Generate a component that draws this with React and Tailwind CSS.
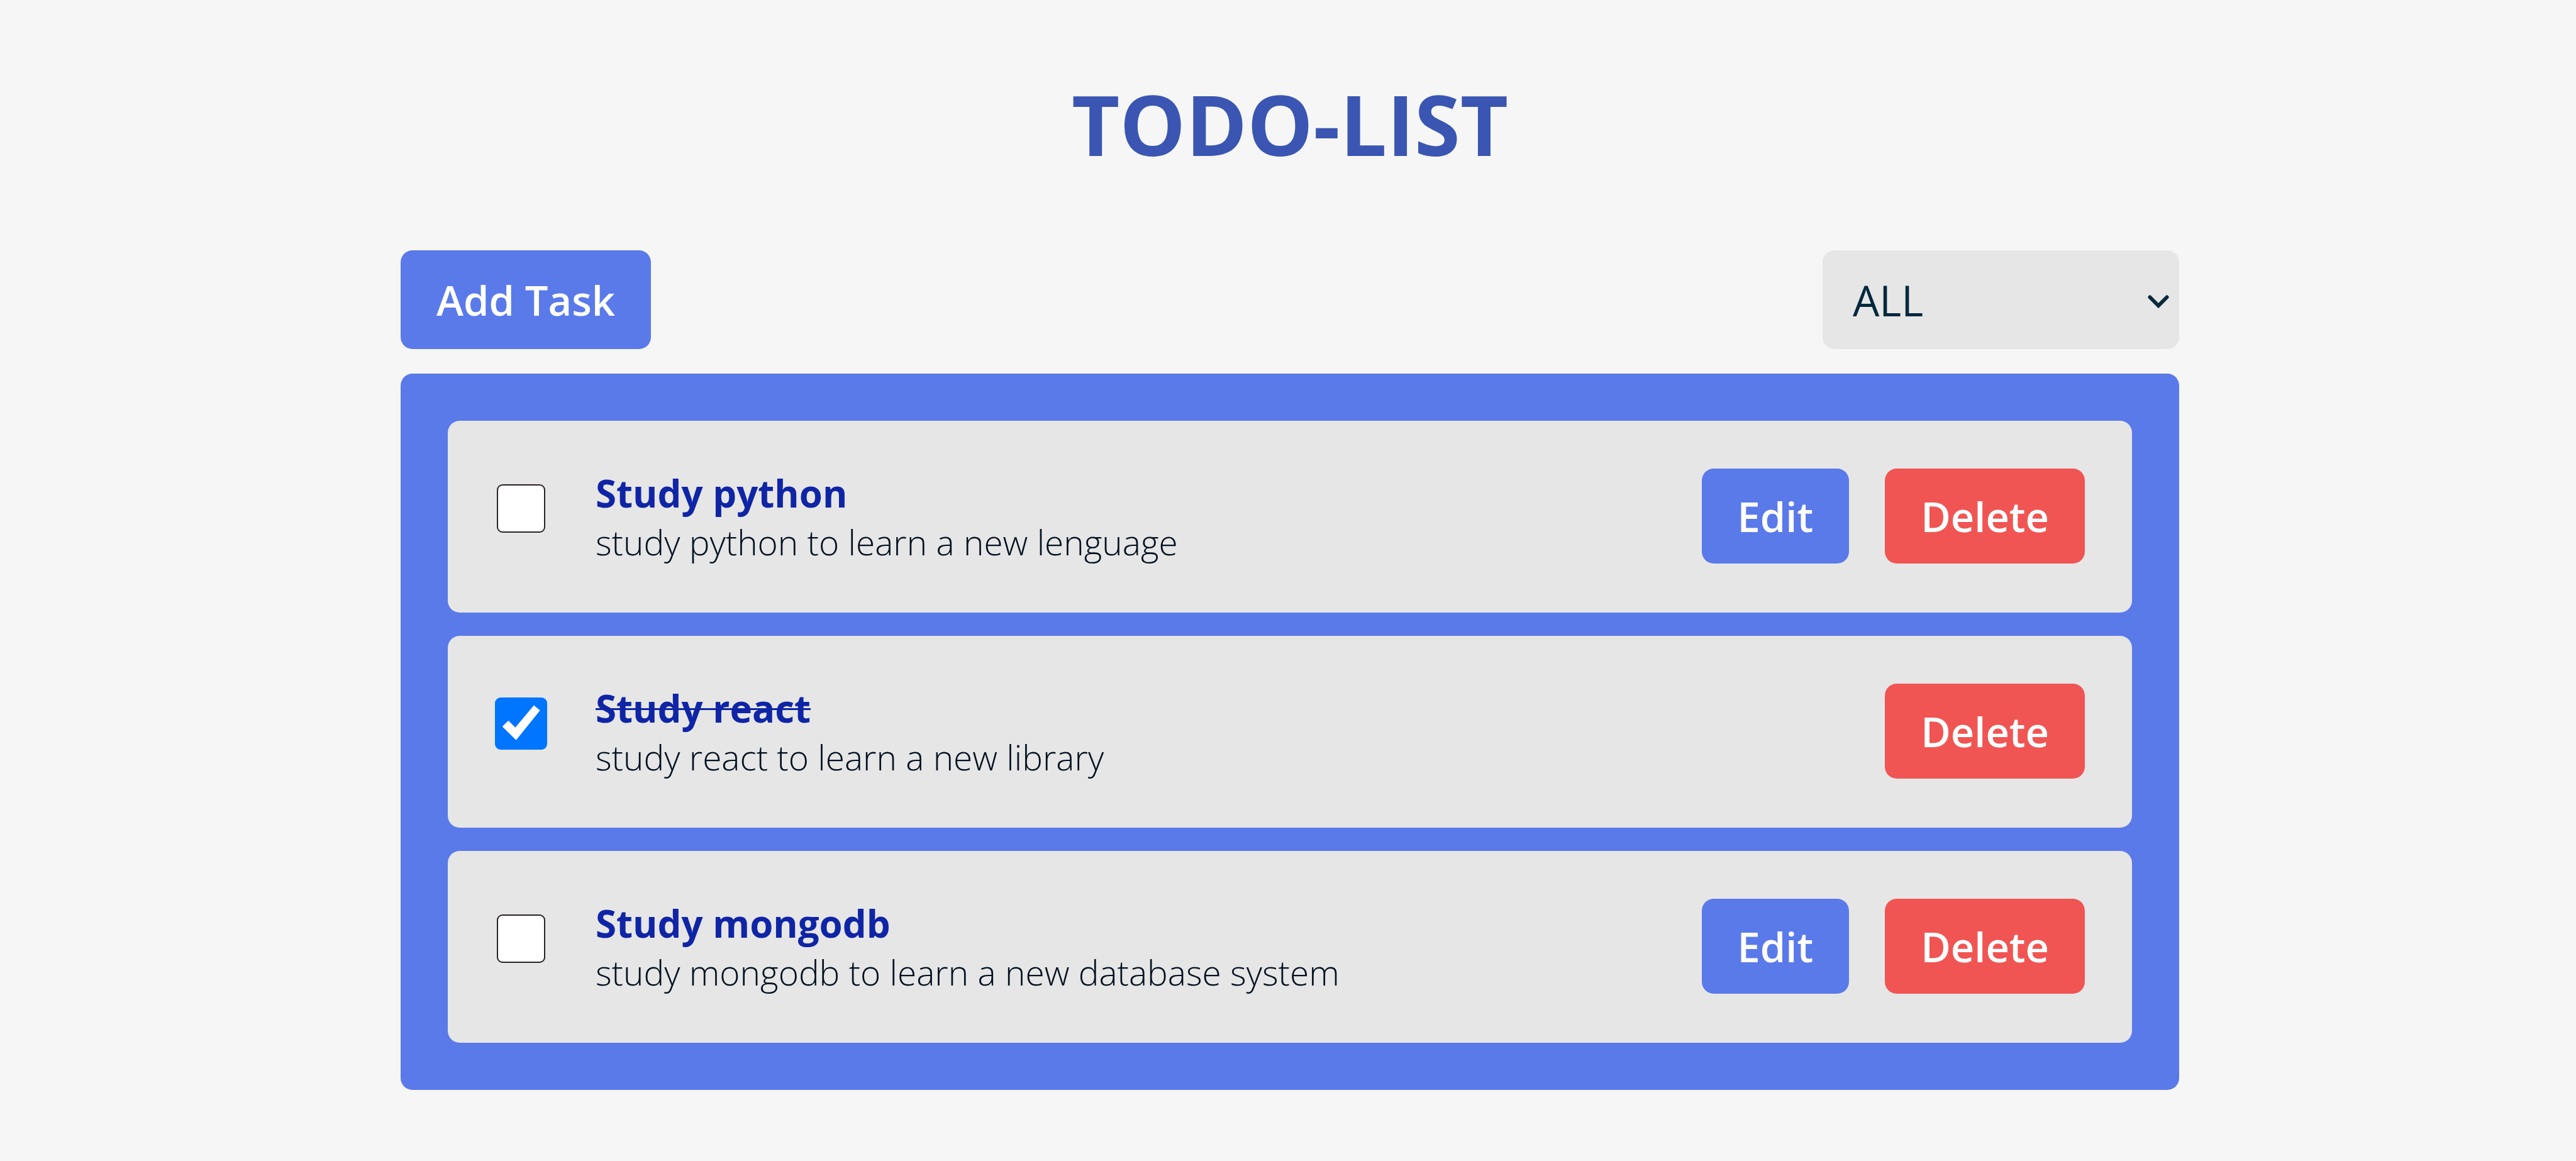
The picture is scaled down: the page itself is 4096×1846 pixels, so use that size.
import { useState } from "react";

const initialTasks = [
  { id: 1, title: "Study python", detail: "study python to learn a new lenguage", done: false },
  { id: 2, title: "Study react", detail: "study react to learn a new library", done: true },
  { id: 3, title: "Study mongodb", detail: "study mongodb to learn a new database system", done: false },
];

function CheckBox({ id, checked, onChange }) {
  return (
    <span className="mt-[22px] grid size-[83px] shrink-0 place-items-center">
      <input
        id={id}
        type="checkbox"
        checked={checked}
        onChange={onChange}
        className="col-start-1 row-start-1 size-[77px] appearance-none rounded-[9px] border-2 border-[#2a2224] bg-white checked:size-[83px] checked:border-0 checked:bg-[#0075ff]"
      />
      {checked && (
        <svg
          viewBox="0 0 83 83"
          className="pointer-events-none col-start-1 row-start-1 size-[83px]"
          aria-hidden="true"
        >
          <path d="M61.9 12.6L71.7 20.6L33.7 67.7L11.6 46.3L21.4 36.7L32.4 47.8Z" fill="#fff" />
        </svg>
      )}
    </span>
  );
}

function Task({ task, onToggle, onDelete }) {
  const boxId = `task-${task.id}`;
  return (
    <li className="flex items-start rounded-[19px] bg-[#e6e6e6] px-[75px] pt-[76px] pb-[74px]">
      <div className="flex flex-1 gap-[77px]">
        <CheckBox id={boxId} checked={task.done} onChange={() => onToggle(task.id)} />
        <div>
          <label
            htmlFor={boxId}
            className={
              task.done
                ? "block text-[60px] leading-[78px] font-bold text-[#0f25a6] line-through decoration-3"
                : "block text-[60px] leading-[78px] font-bold text-[#0f25a6]"
            }
          >
            {task.title}
          </label>
          <p className="text-[55px] leading-[77px] font-light text-[#02101f]">{task.detail}</p>
        </div>
      </div>
      <div className="flex gap-[57px] text-[65px] leading-[91px] font-semibold text-white">
        {!task.done && (
          <button type="button" className="rounded-[19px] bg-[#5a7aea] px-[57px] pt-[31px] pb-[29px]">
            Edit
          </button>
        )}
        <button
          type="button"
          onClick={() => onDelete(task.id)}
          className="rounded-[19px] bg-[#f05553] px-[57px] pt-[31px] pb-[29px]"
        >
          Delete
        </button>
      </div>
    </li>
  );
}

export default function App() {
  const [tasks, setTasks] = useState(initialTasks);
  const [filter, setFilter] = useState("all");

  const toggle = (id) =>
    setTasks((list) => list.map((t) => (t.id === id ? { ...t, done: !t.done } : t)));
  const remove = (id) => setTasks((list) => list.filter((t) => t.id !== id));
  const visible = tasks.filter((t) => filter === "all" || t.done === (filter === "done"));

  return (
    <div className="min-h-screen bg-[#f6f6f6] pl-1.5 font-['Open_Sans',sans-serif]">
      <main className="mx-auto max-w-[2828px] pt-[107px]">
        <h1 className="text-center text-[132px] leading-[180px] font-bold text-[#3a56b2]">
          TODO-LIST
        </h1>
        <div className="mt-[111px] flex justify-between">
          <button
            type="button"
            className="rounded-[19px] bg-[#5a7aea] px-[57px] pt-[33px] pb-[31px] text-[65px] leading-[93px] font-semibold text-white"
          >
            Add Task
          </button>
          <div className="grid w-[567px] items-center">
            <select
              aria-label="Filter tasks"
              value={filter}
              onChange={(e) => setFilter(e.target.value)}
              className="col-start-1 row-start-1 h-full appearance-none rounded-[19px] bg-[#e6e6e6] pt-0.5 pl-12 text-[67px] leading-[93px] text-[#04283c]"
            >
              <option value="all">ALL</option>
              <option value="todo">Incomplete</option>
              <option value="done">Complete</option>
            </select>
            <svg
              viewBox="0 0 34 22"
              className="pointer-events-none col-start-1 row-start-1 mt-1.5 mr-4 h-[22px] w-[34px] justify-self-end"
              aria-hidden="true"
            >
              <path d="M3.5 3.5L17 17L30.5 3.5" fill="none" stroke="#04283c" strokeWidth="6" strokeLinecap="round" />
            </svg>
          </div>
        </div>
        <ul className="mt-[39px] flex flex-col gap-[37px] rounded-[19px] bg-[#5a7aea] p-[75px]">
          {visible.map((task) => (
            <Task key={task.id} task={task} onToggle={toggle} onDelete={remove} />
          ))}
        </ul>
      </main>
    </div>
  );
}
